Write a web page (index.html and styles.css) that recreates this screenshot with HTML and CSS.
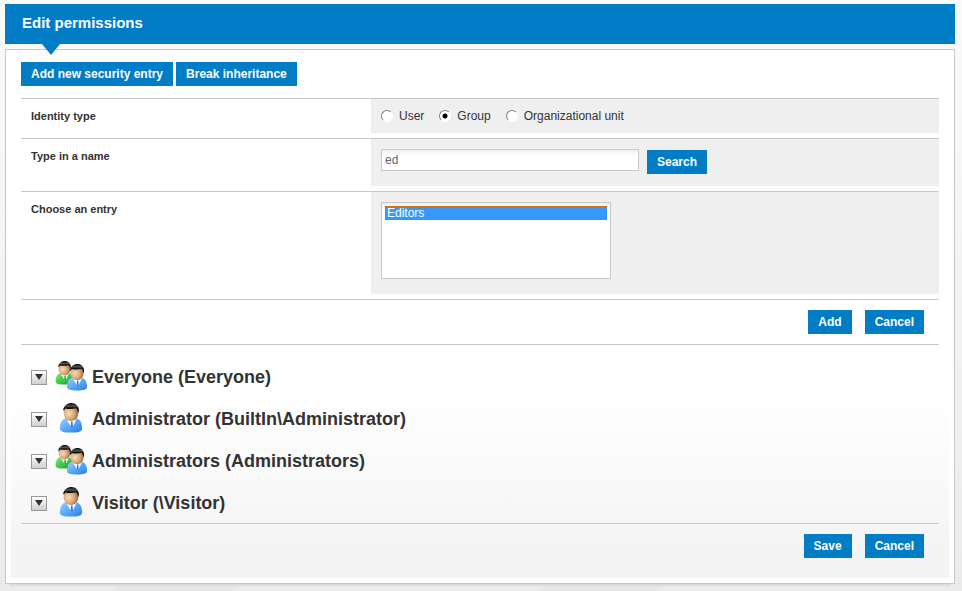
FILE: index.html
```html
<!DOCTYPE html>
<html lang="en">
<head>
<meta charset="utf-8">
<title>Edit permissions</title>
<link rel="stylesheet" href="styles.css">
</head>
<body>
<svg class="defs" width="0" height="0" aria-hidden="true">
  <defs>
    <radialGradient id="skin" cx=".35" cy=".5" r=".7"><stop offset="0" stop-color="#fbdcb8"/><stop offset=".55" stop-color="#d9a878"/><stop offset="1" stop-color="#8d5a30"/></radialGradient>
    <linearGradient id="blue" x1="0" y1="0" x2="1" y2="1"><stop offset="0" stop-color="#9dd0ff"/><stop offset=".5" stop-color="#5aa8f8"/><stop offset="1" stop-color="#2480e4"/></linearGradient>
    <linearGradient id="green" x1="0" y1="0" x2="1" y2="1"><stop offset="0" stop-color="#8fe88a"/><stop offset=".5" stop-color="#41c744"/><stop offset="1" stop-color="#159a20"/></linearGradient>
    <linearGradient id="hair" x1="0" y1="0" x2="0" y2="1"><stop offset="0" stop-color="#000"/><stop offset=".3" stop-color="#555"/><stop offset=".5" stop-color="#0a0a0a"/></linearGradient>
    <symbol id="person" viewBox="0 0 24 31">
      <path d="M.5 26.500C.5 20 3 16 7.500 15.500h9C21 16 23.500 20 23.500 26.500c0 3-4 4-11.500 4s-11.500-1-11.500-4z"/>
      <path d="M6.500 15.500h11.500l-5 11z" fill="#f4faff"/>
      <path d="M12 19h1.500l.5 5-1 3-1.200-3z" class="tie"/>
      <path d="M4.500 10c0-5 2.500-7 7.500-7s7.500 2 7.500 7-3 8.500-7.500 8.500S4.500 15 4.500 10z" fill="url(#skin)"/>
      <path d="M4 7C4.500 2.500 8.500 0 12.500 0S21 3 20 9l-.8 1.500c-.2-2.500-.7-3.500-1.700-5-4 1-8 1-11.500.2L4.700 8z" fill="url(#hair)"/>
    </symbol>
  </defs>
</svg>
<header class="title-bar"><h1>Edit permissions</h1></header>
<main class="panel">
  <div class="content">
    <div class="toolbar">
      <button class="btn" type="button">Add new security entry</button>
      <button class="btn" type="button">Break inheritance</button>
    </div>
    <form class="form">
      <div class="row" role="radiogroup" aria-labelledby="type-label">
        <span class="label" id="type-label">Identity type</span>
        <div class="field radios">
          <label><input type="radio" name="type">User</label>
          <label><input type="radio" name="type" checked>Group</label>
          <label><input type="radio" name="type">Organizational unit</label>
        </div>
      </div>
      <div class="row">
        <label class="label" for="name">Type in a name</label>
        <div class="field search">
          <input class="text" id="name" type="text" value="ed">
          <button class="btn" type="button">Search</button>
        </div>
      </div>
      <div class="row">
        <label class="label" for="entry">Choose an entry</label>
        <div class="field choose">
          <select class="list" id="entry" size="4"><option selected>Editors</option></select>
        </div>
      </div>
      <div class="actions">
        <button class="btn" type="button">Add</button>
        <button class="btn" type="button">Cancel</button>
      </div>
    </form>
    <ul class="entries">
      <li>
        <button class="toggle" type="button" aria-label="Expand Everyone"></button>
        <svg class="icon" viewBox="0 0 32 32"><use class="green" href="#person" x="-1" y="0" width="19" height="24"/><use class="blue" href="#person" x="10" y="3" width="22" height="27"/></svg>
        <h2>Everyone (Everyone)</h2>
      </li>
      <li>
        <button class="toggle" type="button" aria-label="Expand Administrator"></button>
        <svg class="icon" viewBox="0 0 32 32"><use class="blue" href="#person" x="3" y="0" width="24" height="30"/></svg>
        <h2>Administrator (BuiltIn\Administrator)</h2>
      </li>
      <li>
        <button class="toggle" type="button" aria-label="Expand Administrators"></button>
        <svg class="icon" viewBox="0 0 32 32"><use class="green" href="#person" x="-1" y="0" width="19" height="24"/><use class="blue" href="#person" x="10" y="3" width="22" height="27"/></svg>
        <h2>Administrators (Administrators)</h2>
      </li>
      <li>
        <button class="toggle" type="button" aria-label="Expand Visitor"></button>
        <svg class="icon" viewBox="0 0 32 32"><use class="blue" href="#person" x="3" y="0" width="24" height="30"/></svg>
        <h2>Visitor (\Visitor)</h2>
      </li>
    </ul>
    <div class="actions final">
      <button class="btn" type="button">Save</button>
      <button class="btn" type="button">Cancel</button>
    </div>
  </div>
</main>
</body>
</html>
```
FILE: styles.css
```css
* { box-sizing: border-box; }
html {
  min-height: 100%;
  background:
    linear-gradient(135deg, transparent 4px, #e6e6e6 4px 87px, transparent 87px) 113px 100% / 427px 6px repeat-x,
    linear-gradient(#fafafa, #ebebeb);
}
body {
  margin: 0;
  padding: 4px 7px 7px 5px;
  color: #333;
  font: 12px/16px "Liberation Sans", Arial, sans-serif;
}
.defs { position: absolute; }
h1, h2, ul { margin: 0; padding: 0; }

.title-bar {
  position: relative;
  height: 40px;
  padding: 0 17px;
  background: #007dc5;
  color: #fff;
}
.title-bar h1 { font-size: 15px; line-height: 37px; }
.title-bar::after {
  content: "";
  position: absolute;
  top: 100%;
  left: 37px;
  border: solid transparent;
  border-width: 11px 9px 0;
  border-top-color: #007dc5;
}

.panel {
  margin-top: 5px;
  padding: 5px;
  border: 1px solid #c8c8c8;
  background: #fff;
  box-shadow: 0 6px 0 -4px #dcdcdc;
}
.content {
  padding: 7px 10px 20px;
  background: linear-gradient(#fff 65%, #f3f3f3 97%);
}

.btn {
  height: 24px;
  padding: 0 10px;
  border: 0;
  background: #007dc5;
  color: #fff;
  font: bold 12px/24px "Liberation Sans", Arial, sans-serif;
}
.toolbar { display: flex; gap: 3px; margin-bottom: 12px; }

.row {
  display: grid;
  grid-template-columns: 350px 1fr;
  padding-bottom: 5px;
  border-top: 1px solid #c8c8c8;
}
.label { padding: 9px 10px; font-size: 11px; font-weight: bold; }
.field { display: flex; padding: 10px; background: #efefef; }

.radios { gap: 15px; align-items: center; padding: 9px 10px; }
.radios label { display: flex; align-items: center; gap: 6px; }
.radios input {
  appearance: none;
  width: 12px;
  height: 12px;
  margin: 0;
  border: 1px solid;
  border-color: #808080 #fff #fff #808080;
  border-radius: 50%;
  background: #fff;
}
.radios input:checked { background: radial-gradient(circle, #000 2px, #fff 3px); }

.search { gap: 8px; padding-bottom: 12px; align-items: flex-start; }
.search .btn { margin-top: 1px; }
.text {
  width: 258px;
  height: 22px;
  padding: 0 3px;
  border: 1px solid #c8c8c8;
  background: linear-gradient(#eef0f0, #fff 6px);
  color: #666;
  font: inherit;
}
.list {
  width: 230px;
  height: 77px;
  margin-bottom: 5px;
  padding: 3px;
  border: 1px solid #c8c8c8;
  border-radius: 0;
  outline: 0;
  background: linear-gradient(#eef0f0, #fff 6px);
  font: inherit;
  overflow: hidden;
}
.list option {
  height: 14px;
  min-height: 0;
  padding: 0 2px;
  outline: 1px dotted #d2690a;
  outline-offset: -1px;
  line-height: 14px;
}
.list option:checked {
  background: linear-gradient(#39f, #39f);
  color: #fff;
  -webkit-text-fill-color: #fff;
}

.actions {
  display: flex;
  justify-content: flex-end;
  gap: 13px;
  padding: 10px 15px;
  border-top: 1px solid #c8c8c8;
}
.actions.final { padding-bottom: 0; }

.entries {
  padding: 10px 0 0;
  border-top: 1px solid #c8c8c8;
  list-style: none;
}
.entries li {
  display: flex;
  align-items: center;
  height: 42px;
  padding: 2px 0 0 10px;
}
.entries h2 { margin-left: 4px; font-size: 18px; line-height: 24px; }
.toggle {
  display: grid;
  place-items: center;
  width: 16px;
  height: 15px;
  padding: 0;
  border: 1px solid #999;
  background: linear-gradient(#fff, #cfcfcf);
}
.toggle::before {
  content: "";
  border: solid transparent;
  border-width: 6px 4px 0;
  border-top-color: #333;
}
.icon { width: 32px; height: 32px; margin-left: 9px; overflow: visible; }
.blue { fill: url(#blue); color: #2b7de0; }
.green { fill: url(#green); color: #18a024; }
.tie { fill: currentColor; }
```
